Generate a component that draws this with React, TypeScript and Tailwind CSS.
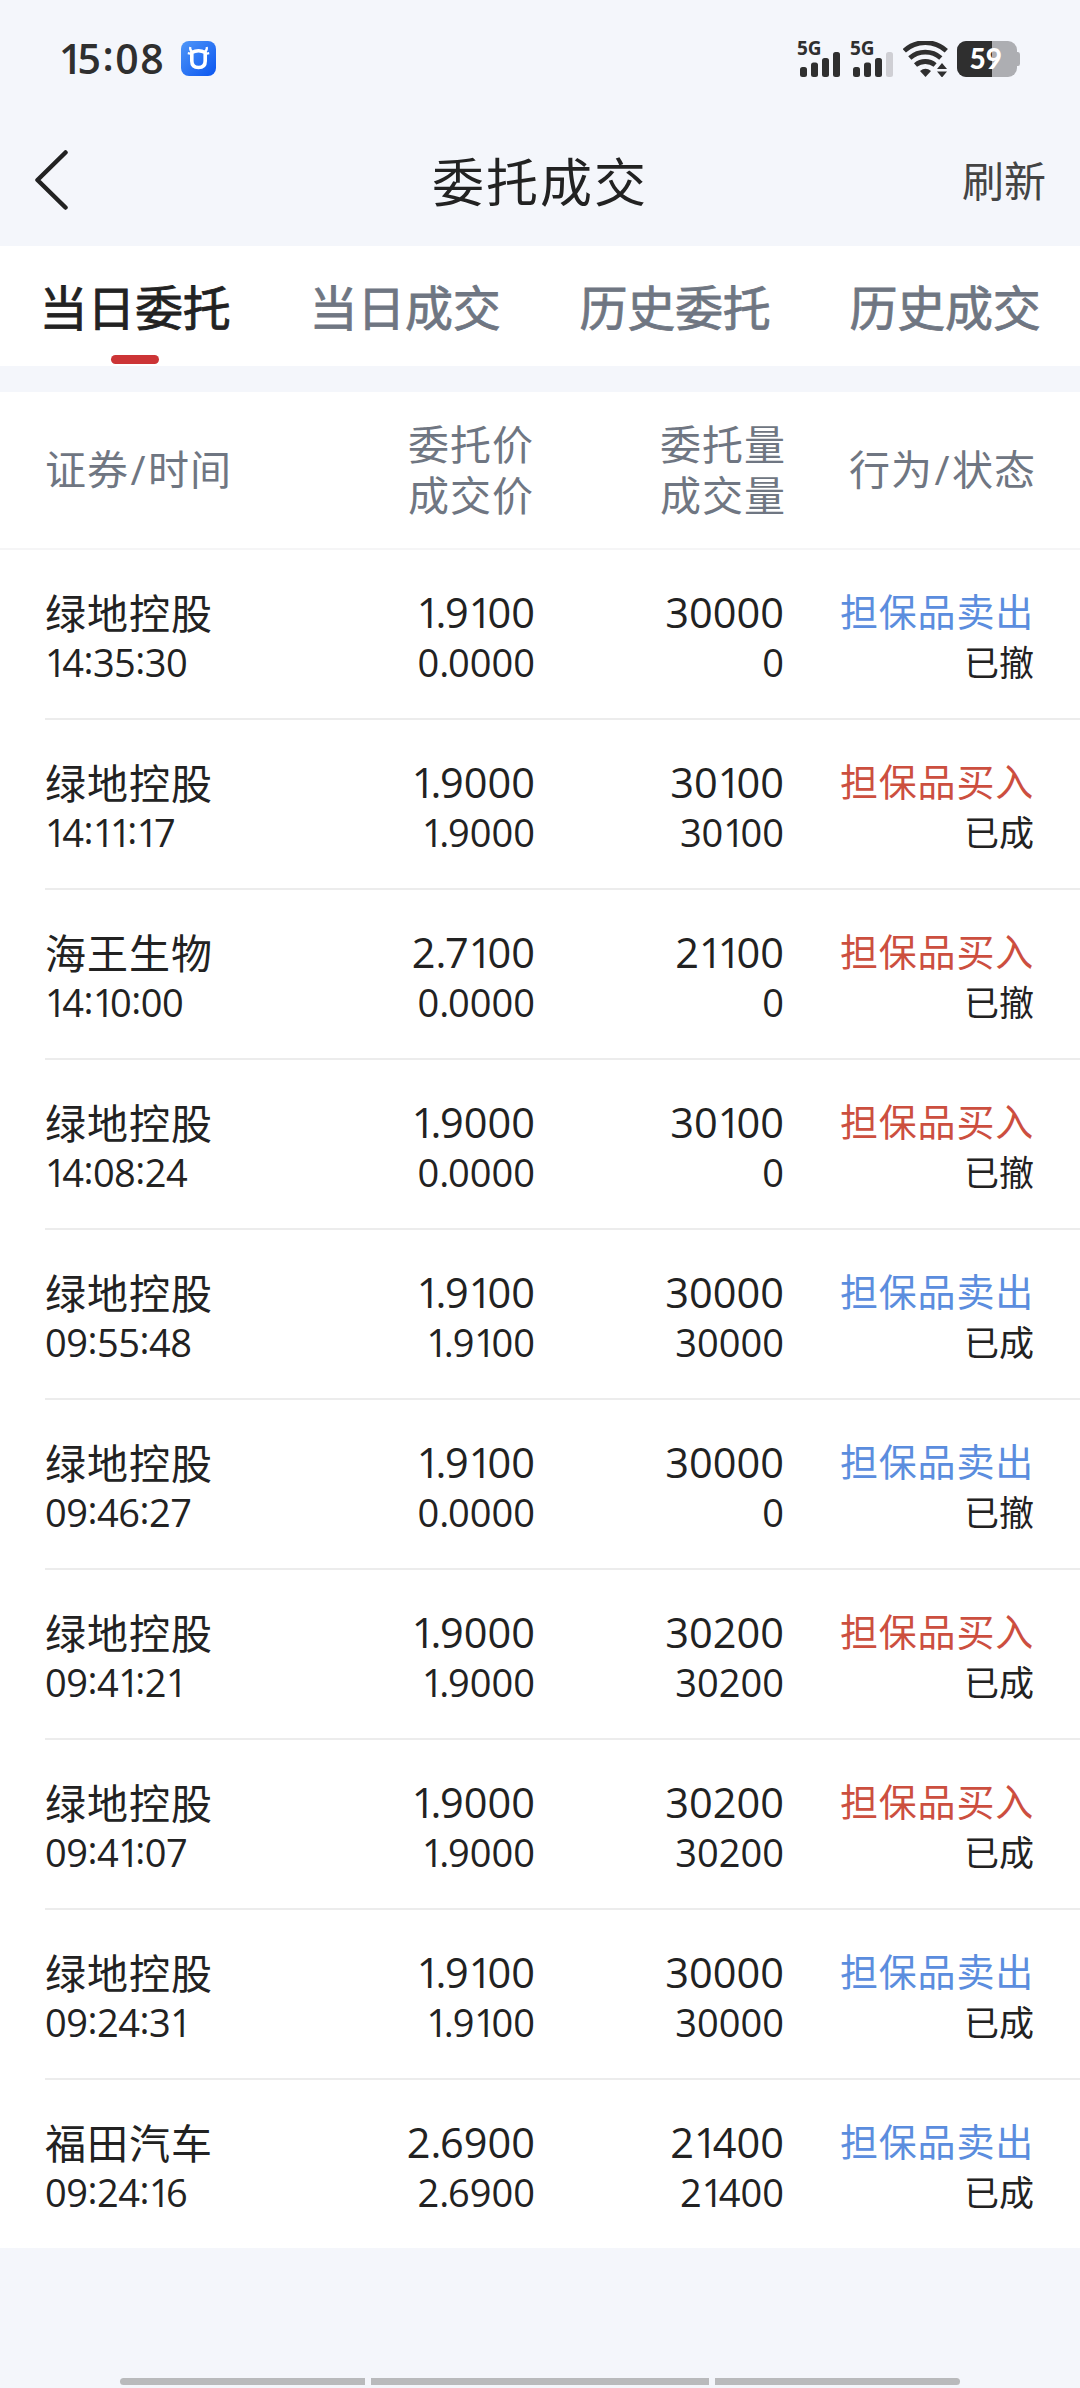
import type { ReactNode } from 'react';

type Side = 'buy' | 'sell';

type Order = {
  name: string;
  time: string;
  price: string;
  dealPrice: string;
  qty: string;
  dealQty: string;
  side: Side;
  status: string;
};

const tabs = ['当日委托', '当日成交', '历史委托', '历史成交'];

const orders: Order[] = [
  { name: '绿地控股', time: '14:35:30', price: '1.9100', dealPrice: '0.0000', qty: '30000', dealQty: '0', side: 'sell', status: '已撤' },
  { name: '绿地控股', time: '14:11:17', price: '1.9000', dealPrice: '1.9000', qty: '30100', dealQty: '30100', side: 'buy', status: '已成' },
  { name: '海王生物', time: '14:10:00', price: '2.7100', dealPrice: '0.0000', qty: '21100', dealQty: '0', side: 'buy', status: '已撤' },
  { name: '绿地控股', time: '14:08:24', price: '1.9000', dealPrice: '0.0000', qty: '30100', dealQty: '0', side: 'buy', status: '已撤' },
  { name: '绿地控股', time: '09:55:48', price: '1.9100', dealPrice: '1.9100', qty: '30000', dealQty: '30000', side: 'sell', status: '已成' },
  { name: '绿地控股', time: '09:46:27', price: '1.9100', dealPrice: '0.0000', qty: '30000', dealQty: '0', side: 'sell', status: '已撤' },
  { name: '绿地控股', time: '09:41:21', price: '1.9000', dealPrice: '1.9000', qty: '30200', dealQty: '30200', side: 'buy', status: '已成' },
  { name: '绿地控股', time: '09:41:07', price: '1.9000', dealPrice: '1.9000', qty: '30200', dealQty: '30200', side: 'buy', status: '已成' },
  { name: '绿地控股', time: '09:24:31', price: '1.9100', dealPrice: '1.9100', qty: '30000', dealQty: '30000', side: 'sell', status: '已成' },
  { name: '福田汽车', time: '09:24:16', price: '2.6900', dealPrice: '2.6900', qty: '21400', dealQty: '21400', side: 'sell', status: '已成' },
];

// Tabular figures, except that the 1 sits tighter and the colon is lifted to mid height.
function Num({ value }: { value: string }) {
  return value.split(/([1:.])/).map((part, i) => {
    if (part === '1') {
      return (
        <span key={i} className="tracking-[-0.12em]">
          1
        </span>
      );
    }
    if (part === '.') {
      return (
        <span key={i} className="tracking-[-0.03em]">
          .
        </span>
      );
    }
    if (part === ':') {
      return (
        <span key={i} className="align-[0.085em] leading-none">
          :
        </span>
      );
    }
    return part;
  });
}

function AppBadge() {
  return (
    <svg width="35" height="35" viewBox="0 0 35 35" fill="none">
      <defs>
        <linearGradient id="badge" x1="0" y1="0" x2="1" y2="1">
          <stop offset="0" stopColor="#4f97f8" />
          <stop offset="1" stopColor="#0a55f0" />
        </linearGradient>
      </defs>
      <rect width="35" height="35" rx="8" fill="url(#badge)" />
      <path d="M10.800 11.500Q17.500 8 24.200 11.500V20q0 6.500-6.700 6.500T10.800 20z" stroke="#fff" strokeWidth="3.600" strokeLinejoin="round" />
      <path d="M9.300 6q-.8 3.200 2 5M25.700 6q.8 3.200-2 5M6.800 12.200l4 .8M28.200 12.200l-4 .8" stroke="#fff" strokeWidth="2.200" />
    </svg>
  );
}

function Signal({ level }: { level: number }) {
  const bars = [
    { x: 4, y: 26 },
    { x: 15, y: 21.5 },
    { x: 26, y: 17 },
    { x: 37, y: 11 },
  ];
  return (
    <svg width="45" height="36" viewBox="0 0 45 36" className="overflow-visible">
      <text x="1" y="14" fontSize="19" fontWeight="700" fontFamily="Open Sans, sans-serif" fill="#2f2f2f">
        5G
      </text>
      {bars.map((b, i) => (
        <rect key={b.x} x={b.x} y={b.y} width="7" height={36 - b.y} rx="2.500" fill={i < level ? '#2f2f2f' : '#cfcfd4'} />
      ))}
    </svg>
  );
}

function Wifi() {
  return (
    <svg width="45" height="36" viewBox="0 0 45 36" fill="none">
      <g stroke="#2f2f2f" strokeWidth="4.800">
        <path d="M1.300 9.800a31 31 0 0 1 42 0" />
        <path d="M6.800 17a23.500 23.500 0 0 1 31 0" />
        <path d="M12.500 24a15.500 15.500 0 0 1 19.600 0" />
      </g>
      <path d="M17 30q5.500-4.400 11 0l-5.500 6z" fill="#2f2f2f" />
      <path d="M34 28l5-6 5 6zM34 30.500l5 6 5-6z" fill="#2f2f2f" />
    </svg>
  );
}

function Battery() {
  return (
    <svg width="64" height="36" viewBox="0 0 64 36">
      <defs>
        <clipPath id="cell">
          <rect width="60" height="36" rx="9" />
        </clipPath>
      </defs>
      <path d="M59 11h2q2 0 2 2.500v9q0 2.500-2 2.500h-2z" fill="#adaeb2" />
      <g clipPath="url(#cell)">
        <rect width="60" height="36" fill="#adaeb2" />
        <rect width="35" height="36" fill="#2f2f2f" />
      </g>
      <text x="12.500" y="28" fontSize="28" fontWeight="900" fontFamily="Lato, sans-serif" fill="#fff">
        59
      </text>
    </svg>
  );
}

function StatusBar() {
  return (
    <div className="flex h-[117px] items-center px-[59px]">
      <span className="mb-[2px] w-[122px] text-[41px] leading-none font-semibold tracking-[1.5px] text-[#2f2f2f]">
        <Num value="15:08" />
      </span>
      <AppBadge />
      <div className="ml-auto flex items-center">
        <Signal level={4} />
        <span className="w-2" />
        <Signal level={3} />
        <span className="w-[9px]" />
        <Wifi />
        <span className="w-[9px]" />
        <Battery />
      </div>
    </div>
  );
}

function NavBar() {
  return (
    <div className="grid h-[129px] grid-cols-3 items-center px-[34px] text-[#222]">
      <svg width="35" height="60" viewBox="0 0 35 60" fill="none" stroke="currentColor" strokeWidth="4.500" strokeLinecap="round" strokeLinejoin="round" className="mb-[3px]">
        <path d="M31.500 2.500L3.500 30l28 27.500" />
      </svg>
      <h1 className="text-center text-[52px] tracking-[2px]">委托成交</h1>
      <span className="pb-0.5 text-right text-[42px] text-[#444]">刷新</span>
    </div>
  );
}

function Cell({ children }: { children: ReactNode }) {
  return <div className="flex flex-col items-end">{children}</div>;
}

function OrderRow({ order }: { order: Order }) {
  return (
    <li className="ml-[45px] grid h-[170px] grid-cols-[240px_250px_249px_250px] border-b-2 border-[#ececec] pt-[37px] text-[#222] last:h-[168px] last:border-b-0">
      <div className="flex flex-col">
        <span className="h-[51px] text-[41px] leading-[52px] tracking-[1px]">{order.name}</span>
        <span className="text-[38px] leading-[49px] tracking-[-0.5px]">
          <Num value={order.time} />
        </span>
      </div>
      <Cell>
        <span className="h-[51px] text-[41.500px] leading-[50px]">
          <Num value={order.price} />
        </span>
        <span className="text-[38px] leading-[49px]">
          <Num value={order.dealPrice} />
        </span>
      </Cell>
      <Cell>
        <span className="h-[51px] text-[41.500px] leading-[50px]">
          <Num value={order.qty} />
        </span>
        <span className="text-[38px] leading-[49px]">
          <Num value={order.dealQty} />
        </span>
      </Cell>
      <Cell>
        <span
          className={
            order.side === 'sell'
              ? 'h-[51px] text-[38px] leading-[48px] tracking-[0.8px] text-[#5b8dde]'
              : 'h-[51px] text-[38px] leading-[48px] tracking-[0.8px] text-[#cc4f3f]'
          }
        >
          {order.side === 'sell' ? '担保品卖出' : '担保品买入'}
        </span>
        <span className="text-[35px] leading-[50px]">{order.status}</span>
      </Cell>
    </li>
  );
}

export default function App() {
  return (
    <div className="flex h-[2388px] w-[1080px] flex-col bg-[#f4f6fb] font-['Open_Sans','Noto_Sans_CJK_SC',sans-serif]">
      <StatusBar />
      <NavBar />

      <nav className="grid h-[120px] grid-cols-4 bg-white">
        {tabs.map((tab, i) => (
          <div key={tab} className={i === 0 ? 'flex flex-col items-center text-[#222]' : 'flex flex-col items-center text-[#6f7682]'}>
            <span className="h-[109px] text-[48px] leading-[123px] tracking-[-0.2px] [-webkit-text-stroke:0.8px]">{tab}</span>
            {i === 0 && <span className="h-[9px] w-12 rounded-full bg-[#cc3436]" />}
          </div>
        ))}
      </nav>

      <section className="mt-[26px] bg-white">
        <div className="grid h-[158px] grid-cols-[240px_249px_252px_250px] items-center border-b-2 border-[#f5f5f6] pl-[45px] text-[41px] leading-[51px] tracking-[1px] text-[#6f7682]">
          <span className="pb-0.5">
            证券<span className="px-[1.500px]">/</span>时间
          </span>
          <Cell>
            <span>委托价</span>
            <span>成交价</span>
          </Cell>
          <Cell>
            <span>委托量</span>
            <span>成交量</span>
          </Cell>
          <span className="pb-0.5 text-right">
            行为<span className="px-[1.500px]">/</span>状态
          </span>
        </div>
        <ul>
          {orders.map((order) => (
            <OrderRow key={order.time} order={order} />
          ))}
        </ul>
      </section>

      {/* gesture bar */}
      <div className="mt-auto mb-[3px] flex h-[7px] justify-center gap-[6px]">
        <span className="w-[245px] rounded-l-full bg-[#b9babc]" />
        <span className="w-[338px] bg-[#b9babc]" />
        <span className="w-[245px] rounded-r-full bg-[#b9babc]" />
      </div>
    </div>
  );
}
